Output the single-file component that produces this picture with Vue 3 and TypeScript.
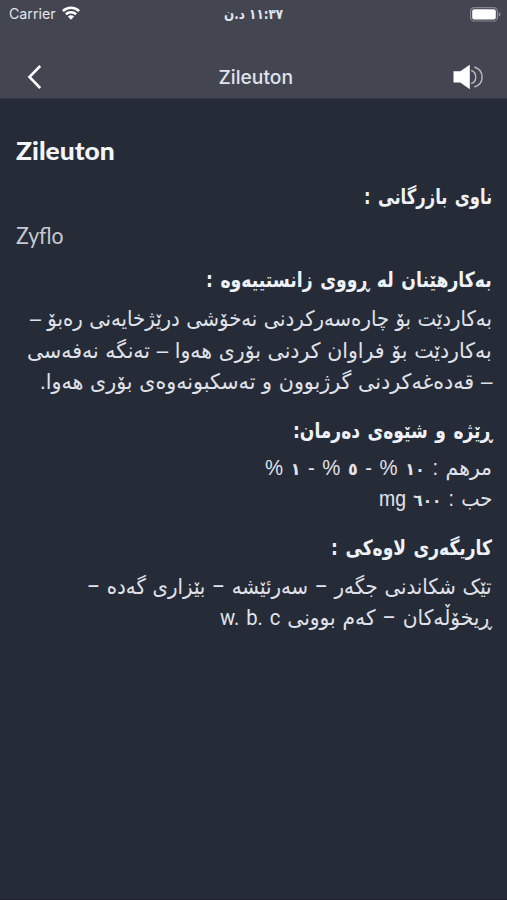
<script setup lang="ts">
import { nextTick, onMounted, ref } from 'vue'

interface Line {
  text: string
  width: number
}

interface Section {
  title: Line
  kind: string
  lines: Line[]
}

const sections: Section[] = [
  {
    title: { text: 'ناوی بازرگانی :', width: 128 },
    kind: 'brand',
    lines: [{ text: 'Zyflo', width: 48 }],
  },
  {
    title: { text: 'بەکارهێنان لە ڕووی زانستییەوە :', width: 286 },
    kind: 'usage',
    lines: [
      { text: 'بەکاردێت بۆ چارەسەرکردنی نەخۆشی درێژخایەنی رەبۆ –', width: 462 },
      { text: 'بەکاردێت بۆ فراوان کردنی بۆری هەوا – تەنگە نەفەسی', width: 465 },
      { text: '– قەدەغەکردنی گرژبوون و تەسکبونەوەی بۆری هەوا.', width: 452 },
    ],
  },
  {
    title: { text: 'ڕێژە و شێوەی دەرمان:', width: 199 },
    kind: 'dose',
    lines: [
      { text: 'مرهم : ١٠ % - ٥ % - ١ %', width: 227 },
      { text: 'حب : ٦٠٠ mg', width: 113 },
    ],
  },
  {
    title: { text: 'کاریگەری لاوەکی :', width: 161 },
    kind: 'effects',
    lines: [
      { text: 'تێک شکاندنی جگەر – سەرئێشە – بێزاری گەدە –', width: 405 },
      { text: 'ڕیخۆڵەکان – کەم بوونی w. b. c', width: 272 },
    ],
  },
]

const isNumber = (part: string): boolean => /^[٠-٩]+$/.test(part)
const split = (text: string): string[] => text.split(/([٠-٩]+)/).filter(Boolean)

const root = ref<HTMLElement | null>(null)

onMounted(async () => {
  await document.fonts.ready
  await nextTick()
  root.value?.querySelectorAll<HTMLElement>('[data-fit]').forEach((el) => {
    el.style.transform = `scaleX(${Number(el.dataset.fit) / el.offsetWidth})`
  })
})
</script>

<template>
  <div ref="root" class="screen">
    <header class="top">
      <div class="status">
        <div class="carrier">
          <span class="fit left" data-fit="47">Carrier</span>
          <svg width="18" height="14" viewBox="0 0 18 14" fill="none" stroke="#fff" stroke-width="2.6">
            <path d="M.9 5.1a11.4 11.4 0 0 1 16.2 0" />
            <path d="M3.9 8.3a7.3 7.3 0 0 1 10.2 0" />
            <path d="M9 13.7 5.9 10.6a4.4 4.4 0 0 1 6.2 0z" fill="#fff" stroke="none" />
          </svg>
        </div>
        <div class="clock" dir="rtl"><span class="fit center" data-fit="59">١١:٣٧ د.ن</span></div>
        <div class="battery">
          <svg width="31" height="15" viewBox="0 0 31 15">
            <rect x=".6" y=".6" width="26.8" height="13.4" rx="3.6" fill="none" stroke="#858790" stroke-width="1.2" />
            <rect x="2.2" y="2.2" width="23.6" height="10.2" rx="2" fill="#fff" />
            <path d="M28.6 5q2 .7 2 2.3t-2 2.3z" fill="#858790" />
          </svg>
        </div>
      </div>
      <nav class="nav">
        <svg class="back" width="15" height="24" viewBox="0 0 15 24" fill="none" stroke="#fff" stroke-width="2.5">
          <path d="M13.2 1 2.4 12l10.8 11" />
        </svg>
        <span class="nav-title"><span class="fit center" data-fit="75">Zileuton</span></span>
        <svg class="sound" width="31" height="26" viewBox="0 0 31 26">
          <path d="M.5 7.2h6.8L16.8.8v24.4l-9.5-6.7H.5z" fill="#fff" />
          <g fill="none" stroke="#b9bbc1" stroke-width="1.4">
            <path d="M18.2 6.5c6 1.5 6 11.5 0 13" />
            <path d="M21.4 3c10.3 3.3 10.3 16.7 0 20" />
          </g>
        </svg>
      </nav>
    </header>

    <main class="content">
      <h1><span class="fit left" data-fit="99">Zileuton</span></h1>
      <section v-for="section in sections" :key="section.kind" :class="['section', section.kind]" dir="rtl">
        <h2><span class="fit" :data-fit="section.title.width">{{ section.title.text }}</span></h2>
        <p v-for="line in section.lines" :key="line.text">
          <span class="fit" :data-fit="line.width"><span v-for="(part, i) in split(line.text)" :key="i" :class="{ number: isNumber(part) }">{{ part }}</span></span>
        </p>
      </section>
    </main>
  </div>
</template>

<style>
body {
  margin: 0;
  background: #262c37;
}
</style>

<style scoped>
.screen {
  width: 507px;
  height: 900px;
  box-sizing: border-box;
  overflow: hidden;
  background: #262c37;
  border-bottom: 1px solid #211f2d;
  color: #e0e3ec;
  font-family: 'DejaVu Sans', sans-serif;
}

.top {
  height: 99px;
  background: #434651;
  border-bottom: 1px solid #333844;
  box-sizing: border-box;
}

.status {
  display: grid;
  grid-template-columns: 1fr 1fr 1fr;
  height: 28px;
  align-items: center;
}

.carrier {
  display: flex;
  align-items: center;
  gap: 5px;
  padding-left: 9px;
  font: 14.5px/28px Inter, sans-serif;
  color: #e2e4ea;
}

.carrier .fit {
  width: 48px;
}

.carrier svg {
  margin-top: -2px;
}

.clock {
  text-align: center;
  font-size: 14px;
  font-weight: 700;
  line-height: 27px;
}

.battery {
  display: flex;
  justify-content: flex-end;
  padding-right: 6px;
}

.nav {
  display: grid;
  grid-template-columns: 1fr auto 1fr;
  align-items: center;
  height: 68px;
  padding: 30px 23px 0 27px;
  box-sizing: border-box;
  line-height: 24px;
}

.nav-title {
  padding-top: 2px;
  font: 500 19px/24px Inter, sans-serif;
}

.sound {
  justify-self: end;
}

.fit {
  display: inline-block;
  white-space: nowrap;
  transform-origin: right;
}

.fit.left {
  transform-origin: left;
}

.fit.center {
  transform-origin: center;
}

.content {
  padding: 35px 15px 0 16px;
}

h1,
h2,
p {
  margin: 0;
}

h1 {
  height: 34px;
  font: 900 24px/34px Lato, sans-serif;
  color: #f3f5fa;
}

h2 {
  height: 38px;
  font-size: 21px;
  font-weight: 700;
  line-height: 38px;
  word-spacing: 2px;
  color: #eff2f8;
}

p {
  height: 31.5px;
  font: 21.5px/31px 'Liberation Sans', 'DejaVu Sans', sans-serif;
  word-spacing: 1px;
}

.number {
  font-family: 'DejaVu Sans', sans-serif;
  font-size: 17px;
  font-weight: 700;
}

.brand {
  margin-top: 10px;
}

.brand p {
  height: 45px;
  font: 400 23px/38px Lato, sans-serif;
  color: #c6c9d1;
  direction: ltr;
}

.brand p .fit {
  transform-origin: left;
}

.usage {
  margin-bottom: 13px;
}

.usage h2 {
  margin-bottom: 5px;
}

.dose h2 {
  margin-bottom: 3px;
}

.dose p {
  word-spacing: 2px;
}

.dose {
  margin-bottom: 13px;
}

.effects h2 {
  margin-bottom: 4px;
}

.effects p {
  font-family: Roboto, 'DejaVu Sans', sans-serif;
  word-spacing: 2px;
}
</style>
